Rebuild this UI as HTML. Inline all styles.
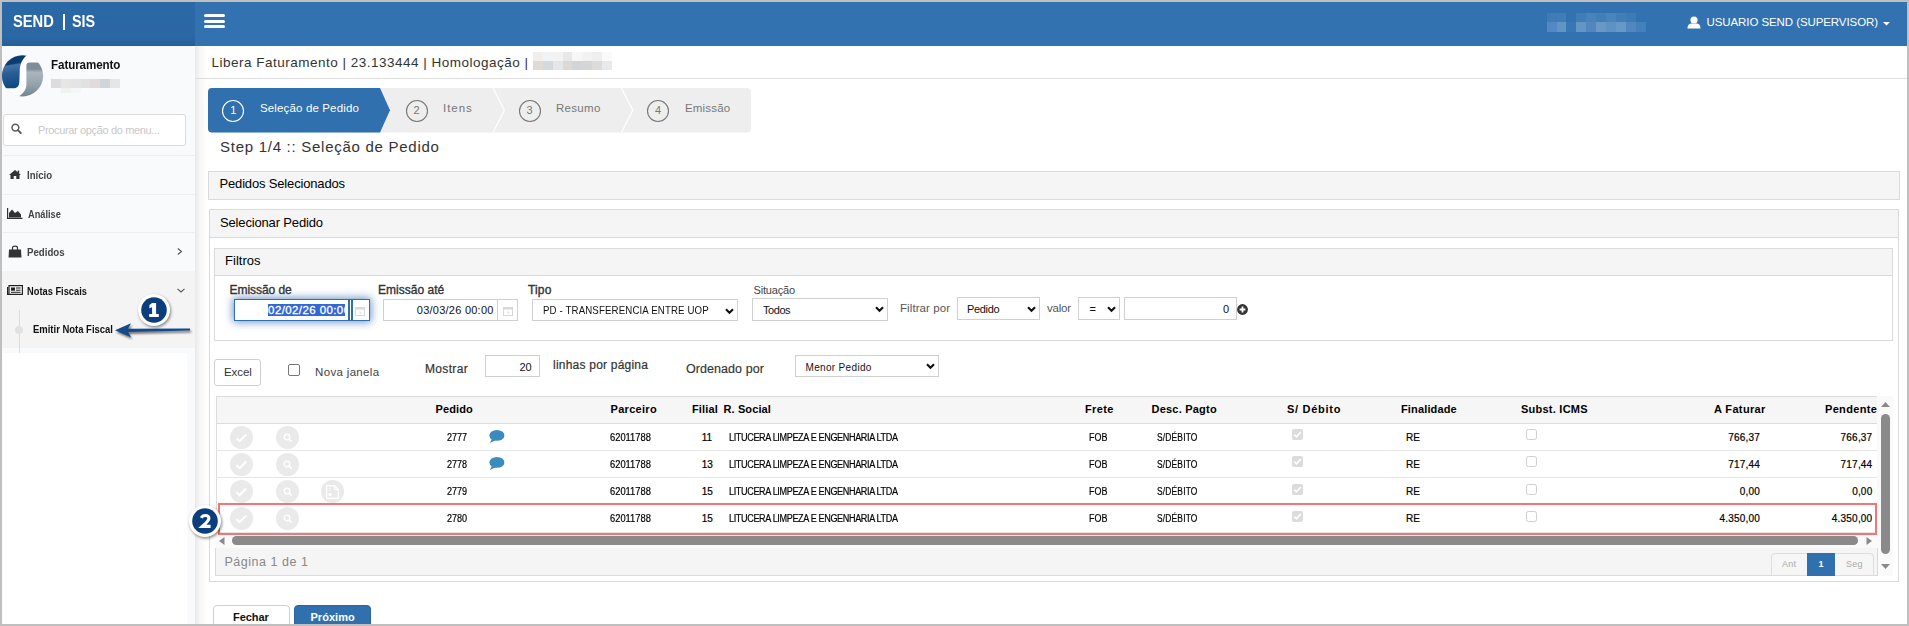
<!DOCTYPE html><html><head><meta charset="utf-8"><style>
html,body{margin:0;padding:0;}
body{width:1909px;height:626px;overflow:hidden;position:relative;background:#fff;font-family:"Liberation Sans", sans-serif;}
.t{position:absolute;white-space:nowrap;}
.r{position:absolute;box-sizing:border-box;}
svg{position:absolute;overflow:visible;}
</style></head><body>
<div class="r" style="left:0px;top:0px;width:195px;height:626px;background:#f9fafc"></div>
<div class="r" style="left:0px;top:0px;width:195px;height:46px;background:linear-gradient(#2b69a7,#2a67a4 80%,#245f9c)"></div>
<div class="r" style="left:195px;top:0px;width:1714px;height:46px;background:#3272b0"></div>
<div class="r" style="left:195px;top:46px;width:12px;height:580px;background:linear-gradient(to right,#e9e9e9,#f6f6f6 40%,#fff)"></div>
<div id="logo1" class="t" style="left:13.00px;top:14.00px;font-size:16px;line-height:16px;font-weight:700;color:#fff;letter-spacing:0px;transform:scaleX(0.919);transform-origin:0 0;">SEND</div>
<div class="r" style="left:63.2px;top:14px;width:2.200000000000003px;height:16px;background:#fff"></div>
<div id="logo3" class="t" style="left:72.40px;top:14.00px;font-size:16px;line-height:16px;font-weight:700;color:#fff;letter-spacing:0px;transform:scaleX(0.8967);transform-origin:0 0;">SIS</div>
<div class="r" style="left:204px;top:14px;width:21px;height:3px;background:#fff;border-radius:1.5px"></div>
<div class="r" style="left:204px;top:19.5px;width:21px;height:3.0px;background:#fff;border-radius:1.5px"></div>
<div class="r" style="left:204px;top:25px;width:21px;height:3px;background:#fff;border-radius:1.5px"></div>
<div class="r" style="left:1547px;top:13px;width:9.5px;height:8.5px;background:#3d7cb7"></div>
<div class="r" style="left:1547px;top:21.5px;width:9.5px;height:10.5px;background:#5288c3"></div>
<div class="r" style="left:1556.5px;top:13px;width:9.5px;height:8.5px;background:#3f7db8"></div>
<div class="r" style="left:1556.5px;top:21.5px;width:9.5px;height:10.5px;background:#6195c4"></div>
<div class="r" style="left:1566px;top:21.5px;width:10px;height:10.5px;background:#3777b3"></div>
<div class="r" style="left:1576px;top:13px;width:10px;height:8.5px;background:#3e7db8"></div>
<div class="r" style="left:1576px;top:21.5px;width:10px;height:10.5px;background:#6196c5"></div>
<div class="r" style="left:1586px;top:13px;width:10px;height:8.5px;background:#4784bb"></div>
<div class="r" style="left:1586px;top:21.5px;width:10px;height:10.5px;background:#5187bd"></div>
<div class="r" style="left:1596px;top:13px;width:10px;height:8.5px;background:#417fb7"></div>
<div class="r" style="left:1596px;top:21.5px;width:10px;height:10.5px;background:#6899c4"></div>
<div class="r" style="left:1606px;top:13px;width:10px;height:8.5px;background:#4785bc"></div>
<div class="r" style="left:1606px;top:21.5px;width:10px;height:10.5px;background:#5d93c3"></div>
<div class="r" style="left:1616px;top:13px;width:10px;height:8.5px;background:#427fb8"></div>
<div class="r" style="left:1616px;top:21.5px;width:10px;height:10.5px;background:#6699c5"></div>
<div class="r" style="left:1626px;top:13px;width:10px;height:8.5px;background:#3d7bb6"></div>
<div class="r" style="left:1626px;top:21.5px;width:10px;height:10.5px;background:#5088bd"></div>
<div class="r" style="left:1636px;top:21.5px;width:10px;height:10.5px;background:#4480ba"></div>
<svg style="left:1687px;top:16px" width="14" height="13" viewBox="0 0 14 13"><circle cx="7" cy="4" r="3.6" fill="#fff"/><path d="M0.5 12.5 C0.5 8.5 3 7.6 4.5 7.6 L9.5 7.6 C11 7.6 13.5 8.5 13.5 12.5 Z" fill="#fff"/></svg>
<div id="user" class="t" style="left:1706.50px;top:17.00px;font-size:11.5px;line-height:11.5px;font-weight:400;color:#fff;letter-spacing:-0.085px;">USUARIO SEND (SUPERVISOR)</div>
<svg style="left:1883px;top:22px" width="7" height="4" viewBox="0 0 7 4"><path d="M0 0 L7 0 L3.5 3.5Z" fill="#fff"/></svg>
<svg style="left:2px;top:55px" width="41" height="42" viewBox="0 0 41 42">
<defs><linearGradient id="gb" x1="0" y1="0" x2="0.15" y2="1"><stop offset="0" stop-color="#073a6e"/><stop offset="0.36" stop-color="#0a3e72"/><stop offset="0.40" stop-color="#4474a6"/><stop offset="0.6" stop-color="#2b5f95"/><stop offset="1" stop-color="#0e4a82"/></linearGradient>
<linearGradient id="gg" x1="0" y1="0" x2="0" y2="1"><stop offset="0.18" stop-color="#7e8d98"/><stop offset="0.27" stop-color="#aab6bd"/><stop offset="0.6" stop-color="#95a3ac"/><stop offset="1" stop-color="#6e7f8b"/></linearGradient>
<clipPath id="cc"><circle cx="20.5" cy="20.8" r="20.6"/></clipPath></defs>
<circle cx="20.5" cy="20.8" r="20.8" fill="#e9ecef"/>
<g clip-path="url(#cc)"><rect x="-2" y="-2" width="45" height="46" fill="#fff"/>
<path d="M-2 -2 L28 -2 C23 1 18.5 6 17.8 14 L17.4 26 C17.2 31 15.5 33.3 11.5 33.3 L-2 33.3 Z" fill="url(#gb)"/>
<path d="M27.6 7.4 L44 7.4 L44 44 L10 44 C18 42 24.4 37 24.4 29 L24.4 10.6 C24.4 8.6 25.6 7.4 27.6 7.4 Z" fill="url(#gg)"/>
</g></svg>
<div id="fat" class="t" style="left:51.00px;top:58.00px;font-size:13px;line-height:13px;font-weight:700;color:#111;letter-spacing:-0.1px;transform:scaleX(0.8935);transform-origin:0 0;">Faturamento</div>
<div class="r" style="left:51.0px;top:79px;width:9.850000000000001px;height:9px;background:#dddcdd"></div>
<div class="r" style="left:60.85px;top:79px;width:9.850000000000001px;height:9px;background:#e6e6e7"></div>
<div class="r" style="left:70.7px;top:79px;width:9.849999999999994px;height:9px;background:#e5e4e5"></div>
<div class="r" style="left:80.55px;top:79px;width:9.850000000000009px;height:9px;background:#e1e1e2"></div>
<div class="r" style="left:90.4px;top:79px;width:9.849999999999994px;height:9px;background:#e0dcdb"></div>
<div class="r" style="left:100.25px;top:79px;width:9.849999999999994px;height:9px;background:#d1d5da"></div>
<div class="r" style="left:110.1px;top:79px;width:9.850000000000009px;height:9px;background:#e6e6e7"></div>
<div class="r" style="left:60.85px;top:88px;width:9.850000000000001px;height:4.5px;background:#f1f1f0"></div>
<div class="r" style="left:70.7px;top:88px;width:9.849999999999994px;height:4.5px;background:#f5f6f8"></div>
<div class="r" style="left:3px;top:114px;width:183px;height:32px;background:#fff;border:1px solid #dcdcdc;border-radius:3px"></div>
<svg style="left:11px;top:123px" width="11" height="11" viewBox="0 0 11 11"><circle cx="4.4" cy="4.6" r="3.4" fill="none" stroke="#5a5a5a" stroke-width="1.5"/><path d="M6.9 7.1 L9.8 10" stroke="#5a5a5a" stroke-width="1.8" stroke-linecap="round"/></svg>
<div id="ph" class="t" style="left:38.00px;top:125.00px;font-size:11px;line-height:11px;font-weight:400;color:#c8c8c8;letter-spacing:-0.354px;">Procurar opção do menu...</div>
<div class="r" style="left:3px;top:155px;width:192px;height:1px;background:#edeef0"></div>
<div class="r" style="left:3px;top:194px;width:192px;height:1px;background:#edeef0"></div>
<div class="r" style="left:3px;top:232px;width:192px;height:1px;background:#edeef0"></div>
<div id="m1" class="t" style="left:27.00px;top:170.00px;font-size:11px;line-height:11px;font-weight:700;color:#444;letter-spacing:0px;transform:scaleX(0.8751);transform-origin:0 0;">Início</div>
<div id="m2" class="t" style="left:28.00px;top:209.00px;font-size:11px;line-height:11px;font-weight:700;color:#444;letter-spacing:0px;transform:scaleX(0.8391);transform-origin:0 0;">Análise</div>
<div id="m3" class="t" style="left:27.00px;top:247.00px;font-size:11px;line-height:11px;font-weight:700;color:#444;letter-spacing:0px;transform:scaleX(0.878);transform-origin:0 0;">Pedidos</div>
<svg style="left:9px;top:170px" width="12" height="9" viewBox="0 0 12 9"><path d="M6 0 L12 5 L10.5 5 L10.5 9 L7.3 9 L7.3 6 L4.7 6 L4.7 9 L1.5 9 L1.5 5 L0 5 Z" fill="#333"/><rect x="8.6" y="0.6" width="1.6" height="2.8" fill="#333"/></svg>
<svg style="left:7px;top:208px" width="16" height="11" viewBox="0 0 16 11"><path d="M0.6 0 L0.6 10.4 L15.5 10.4" stroke="#333" stroke-width="1.2" fill="none"/><path d="M2 9.5 L2 5 L5 1.5 L8 5 L11 3 L14 6.5 L14 9.5 Z" fill="#333"/></svg>
<svg style="left:8px;top:245px" width="14" height="13" viewBox="0 0 14 13"><path d="M4.5 5 L4.5 3 C4.5 0.5 9.5 0.5 9.5 3 L9.5 5" stroke="#333" stroke-width="1.2" fill="none"/><path d="M1 4.5 L13 4.5 L13.5 12.5 L0.5 12.5 Z" fill="#333"/></svg>
<svg style="left:177px;top:248px" width="6" height="7" viewBox="0 0 6 7"><path d="M0.8 0.5 L4.5 3.5 L0.8 6.5" stroke="#555" stroke-width="1.1" fill="none"/></svg>
<div class="r" style="left:2px;top:271px;width:193px;height:77px;background:#f4f4f5"></div>
<div id="m4" class="t" style="left:27.40px;top:286.00px;font-size:11px;line-height:11px;font-weight:700;color:#111;letter-spacing:0px;transform:scaleX(0.8447);transform-origin:0 0;">Notas Fiscais</div>
<svg style="left:7px;top:285px" width="16" height="10" viewBox="0 0 16 10"><rect x="2" y="0.6" width="13.4" height="8.8" fill="none" stroke="#222" stroke-width="1.2"/><path d="M0.6 2 L0.6 9.4 L2 9.4" stroke="#222" stroke-width="1.2" fill="none"/><rect x="4" y="2.5" width="4" height="3.2" fill="#222"/><rect x="9" y="2.5" width="4.5" height="1" fill="#222"/><rect x="9" y="4.7" width="4.5" height="1" fill="#222"/><rect x="4" y="6.8" width="9.5" height="1" fill="#222"/></svg>
<svg style="left:177px;top:288px" width="8" height="5" viewBox="0 0 8 5"><path d="M0.5 0.8 L4 4 L7.5 0.8" stroke="#555" stroke-width="1.1" fill="none"/></svg>
<div class="r" style="left:18.5px;top:310px;width:1.0px;height:43px;background:#dcdcdc"></div>
<svg style="left:15px;top:325.5px" width="8" height="8"><circle cx="4" cy="4" r="4" fill="#e1e1e1"/></svg>
<div id="m5" class="t" style="left:33.00px;top:324.00px;font-size:11px;line-height:11px;font-weight:700;color:#111;letter-spacing:0px;transform:scaleX(0.8602);transform-origin:0 0;">Emitir Nota Fiscal</div>
<div class="r" style="left:3px;top:353px;width:184px;height:273px;background:#fff"></div>
<div id="bc" class="t" style="left:211.40px;top:56.00px;font-size:13.5px;line-height:13.5px;font-weight:400;color:#333;letter-spacing:0.5px;">Libera Faturamento | 23.133444 | Homologação |</div>
<div class="r" style="left:533.0px;top:52px;width:9.850000000000023px;height:9px;background:#f0efee"></div>
<div class="r" style="left:533.0px;top:61px;width:9.850000000000023px;height:9px;background:#dedad8"></div>
<div class="r" style="left:542.85px;top:52px;width:9.850000000000023px;height:9px;background:#f2f3f5"></div>
<div class="r" style="left:542.85px;top:61px;width:9.850000000000023px;height:9px;background:#d6d9dc"></div>
<div class="r" style="left:552.7px;top:52px;width:9.849999999999909px;height:9px;background:#f3f3f3"></div>
<div class="r" style="left:552.7px;top:61px;width:9.849999999999909px;height:9px;background:#e5e6e5"></div>
<div class="r" style="left:562.55px;top:52px;width:9.850000000000023px;height:9px;background:#e8e8e8"></div>
<div class="r" style="left:562.55px;top:61px;width:9.850000000000023px;height:9px;background:#dcd8d4"></div>
<div class="r" style="left:572.4px;top:52px;width:9.850000000000023px;height:9px;background:#f7f7f7"></div>
<div class="r" style="left:572.4px;top:61px;width:9.850000000000023px;height:9px;background:#d2d5d8"></div>
<div class="r" style="left:582.25px;top:52px;width:9.850000000000023px;height:9px;background:#f1f2f1"></div>
<div class="r" style="left:582.25px;top:61px;width:9.850000000000023px;height:9px;background:#d4d6d6"></div>
<div class="r" style="left:592.1px;top:52px;width:9.850000000000023px;height:9px;background:#efefef"></div>
<div class="r" style="left:592.1px;top:61px;width:9.850000000000023px;height:9px;background:#dedcdb"></div>
<div class="r" style="left:601.95px;top:52px;width:9.849999999999909px;height:9px;background:#fafafa"></div>
<div class="r" style="left:601.95px;top:61px;width:9.849999999999909px;height:9px;background:#e8e9eb"></div>
<div class="r" style="left:195px;top:78px;width:1712px;height:1px;background:#dedede"></div>
<svg style="left:208px;top:88px" width="543" height="45" viewBox="0 0 543 45">
<path d="M4 0 L539 0 Q543 0 543 4 L543 40.5 Q543 44.5 539 44.5 L4 44.5 Q0 44.5 0 40.5 L0 4 Q0 0 4 0Z" fill="#eeeeee"/>
<path d="M4 0 L172 0 L182 22.3 L172 44.5 L4 44.5 Q0 44.5 0 40.5 L0 4 Q0 0 4 0Z" fill="#3070ae"/>
<path d="M285 0 L296.4 22.3 L285 44.5" stroke="#fff" stroke-width="1.2" fill="none"/>
<path d="M413.4 0 L424.8 22.3 L413.4 44.5" stroke="#fff" stroke-width="1.2" fill="none"/>
</svg>
<svg style="left:221.3px;top:98.8px" width="24" height="24"><circle cx="12" cy="12" r="10.5" fill="none" stroke="#fff" stroke-width="1.1"/></svg>
<svg style="left:404.5px;top:98.8px" width="24" height="24"><circle cx="12" cy="12" r="10.5" fill="none" stroke="#777" stroke-width="1.1"/></svg>
<svg style="left:517.6px;top:98.8px" width="24" height="24"><circle cx="12" cy="12" r="10.5" fill="none" stroke="#777" stroke-width="1.1"/></svg>
<svg style="left:646.2px;top:98.8px" width="24" height="24"><circle cx="12" cy="12" r="10.5" fill="none" stroke="#777" stroke-width="1.1"/></svg>
<div id="w1n" class="t" style="left:230.30px;top:105.00px;font-size:11px;line-height:11px;font-weight:400;color:#fff;letter-spacing:0px;">1</div>
<div id="w2n" class="t" style="left:413.40px;top:105.00px;font-size:11px;line-height:11px;font-weight:400;color:#777;letter-spacing:0px;">2</div>
<div id="w3n" class="t" style="left:526.50px;top:105.00px;font-size:11px;line-height:11px;font-weight:400;color:#777;letter-spacing:0px;">3</div>
<div id="w4n" class="t" style="left:655.00px;top:105.00px;font-size:11px;line-height:11px;font-weight:400;color:#777;letter-spacing:0px;">4</div>
<div id="w1" class="t" style="left:260.00px;top:103.00px;font-size:11.5px;line-height:11.5px;font-weight:400;color:#fff;letter-spacing:0.142px;">Seleção de Pedido</div>
<div id="w2" class="t" style="left:443.00px;top:103.00px;font-size:11.5px;line-height:11.5px;font-weight:400;color:#777;letter-spacing:0.95px;">Itens</div>
<div id="w3" class="t" style="left:556.00px;top:103.00px;font-size:11.5px;line-height:11.5px;font-weight:400;color:#777;letter-spacing:0.3px;">Resumo</div>
<div id="w4" class="t" style="left:685.00px;top:103.00px;font-size:11.5px;line-height:11.5px;font-weight:400;color:#777;letter-spacing:0.173px;">Emissão</div>
<div id="step" class="t" style="left:220.00px;top:139.00px;font-size:15px;line-height:15px;font-weight:400;color:#333;letter-spacing:0.728px;">Step 1/4 :: Seleção de Pedido</div>
<div class="r" style="left:208px;top:171px;width:1692px;height:29px;background:#f5f5f5;border:1px solid #dadada"></div>
<div id="p1" class="t" style="left:219.50px;top:177.00px;font-size:13px;line-height:13px;font-weight:400;color:#000;letter-spacing:-0.163px;">Pedidos Selecionados</div>
<div class="r" style="left:209px;top:209px;width:1690px;height:373px;background:#fff;border:1px solid #dadada"></div>
<div class="r" style="left:210px;top:210px;width:1688px;height:28px;background:#f5f5f5;border-bottom:1px solid #dadada"></div>
<div id="p2" class="t" style="left:220.00px;top:216.00px;font-size:13px;line-height:13px;font-weight:400;color:#000;letter-spacing:-0.158px;">Selecionar Pedido</div>
<div class="r" style="left:214px;top:248px;width:1679px;height:93px;background:#fff;border:1px solid #dadada"></div>
<div class="r" style="left:215px;top:249px;width:1677px;height:27px;background:#f5f5f5;border-bottom:1px solid #dadada"></div>
<div id="p3" class="t" style="left:225.00px;top:254.00px;font-size:13px;line-height:13px;font-weight:400;color:#000;letter-spacing:0.032px;">Filtros</div>
<div id="l1" class="t" style="left:229.50px;top:284.00px;font-size:12px;line-height:12px;font-weight:400;color:#333;letter-spacing:-0.049px;-webkit-text-stroke:0.35px #333;">Emissão de</div>
<div id="l2" class="t" style="left:378.00px;top:284.00px;font-size:12px;line-height:12px;font-weight:400;color:#333;letter-spacing:0.02px;-webkit-text-stroke:0.35px #333;">Emissão até</div>
<div id="l3" class="t" style="left:528.00px;top:284.00px;font-size:12px;line-height:12px;font-weight:400;color:#333;letter-spacing:0.138px;-webkit-text-stroke:0.35px #333;">Tipo</div>
<div id="l4" class="t" style="left:753.50px;top:285.00px;font-size:11px;line-height:11px;font-weight:400;color:#444;letter-spacing:-0.167px;">Situação</div>
<div class="r" style="left:234px;top:299px;width:136px;height:22px;box-shadow:0 0 8px 1px rgba(40,100,170,0.7)"></div>
<div class="r" style="left:234px;top:299px;width:115px;height:22px;background:#fff;border:1px solid #2f6fb0"></div>
<div class="r" style="left:349px;top:299px;width:3px;height:22px;background:#fff;border-top:1px solid #2f6fb0;border-bottom:1px solid #2f6fb0"></div>
<div class="r" style="left:348px;top:299px;width:2px;height:22px;background:#2f6fb0"></div>
<div class="r" style="left:351px;top:299px;width:2px;height:22px;background:#2f6fb0"></div>
<div class="r" style="left:352px;top:299px;width:18px;height:22px;background:#fff;border:1px solid #2f6fb0"></div>
<div style="position:absolute;left:268px;top:304px;width:77px;height:12px;overflow:hidden;background:#3367d6"><div id="d1" class="t" style="left:0.10px;top:1.00px;font-size:11.5px;line-height:11.5px;font-weight:400;color:#fff;letter-spacing:0.4px;-webkit-text-stroke:0.3px #fff;">02/02/26 00:00</div></div>
<div class="r" style="left:383px;top:299px;width:115px;height:22px;background:#fff;border:1px solid #d0d0d0"></div>
<div class="r" style="left:497px;top:299px;width:21px;height:22px;background:#fff;border:1px solid #d0d0d0"></div>
<div id="d2" class="t" style="left:416.80px;top:305.00px;font-size:11px;line-height:11px;font-weight:400;color:#111;letter-spacing:0.247px;">03/03/26 00:00</div>
<svg style="left:355px;top:306px" width="10" height="10" viewBox="0 0 10 10"><rect x="0.5" y="1.5" width="9" height="8" fill="none" stroke="#d8d8d8" stroke-width="1"/><rect x="0.5" y="1.5" width="9" height="2" fill="#d8d8d8"/><path d="M4 6 L6 6 L5 8" stroke="#d8d8d8" stroke-width="0.8" fill="none"/></svg>
<svg style="left:503px;top:306px" width="10" height="10" viewBox="0 0 10 10"><rect x="0.5" y="1.5" width="9" height="8" fill="none" stroke="#d8d8d8" stroke-width="1"/><rect x="0.5" y="1.5" width="9" height="2" fill="#d8d8d8"/><path d="M4 6 L6 6 L5 8" stroke="#d8d8d8" stroke-width="0.8" fill="none"/></svg>
<div class="r" style="left:532px;top:299px;width:206px;height:22px;background:#fff;border:1px solid #d0d0d0"></div>
<div id="s1" class="t" style="left:542.50px;top:305.00px;font-size:11px;line-height:11px;font-weight:400;color:#111;letter-spacing:0.15px;transform:scaleX(0.8792);transform-origin:0 0;">PD - TRANSFERENCIA ENTRE UOP</div>
<svg style="left:725px;top:307.5px" width="9" height="6" viewBox="0 0 9 6"><path d="M1 1.2 L4.5 4.7 L8 1.2" stroke="#111" stroke-width="2.1" fill="none"/></svg>
<div class="r" style="left:752px;top:298px;width:136px;height:23px;background:#fff;border:1px solid #d0d0d0"></div>
<div id="s2" class="t" style="left:763.00px;top:305.00px;font-size:11px;line-height:11px;font-weight:400;color:#111;letter-spacing:-0.45px;">Todos</div>
<svg style="left:875px;top:306px" width="9" height="6" viewBox="0 0 9 6"><path d="M1 1.2 L4.5 4.7 L8 1.2" stroke="#111" stroke-width="2.1" fill="none"/></svg>
<div id="fp" class="t" style="left:900.00px;top:303.00px;font-size:11.5px;line-height:11.5px;font-weight:400;color:#555;letter-spacing:0.09px;">Filtrar por</div>
<div class="r" style="left:957px;top:297px;width:83px;height:23px;background:#fff;border:1px solid #d0d0d0"></div>
<div id="s3" class="t" style="left:967.00px;top:304.00px;font-size:11px;line-height:11px;font-weight:400;color:#111;letter-spacing:-0.32px;">Pedido</div>
<svg style="left:1027px;top:305.5px" width="9" height="6" viewBox="0 0 9 6"><path d="M1 1.2 L4.5 4.7 L8 1.2" stroke="#111" stroke-width="2.1" fill="none"/></svg>
<div id="vl" class="t" style="left:1047.00px;top:303.00px;font-size:11.5px;line-height:11.5px;font-weight:400;color:#555;letter-spacing:-0.2px;">valor</div>
<div class="r" style="left:1078px;top:297px;width:42px;height:23px;background:#fff;border:1px solid #d0d0d0"></div>
<div id="s4" class="t" style="left:1089.60px;top:304.00px;font-size:11px;line-height:11px;font-weight:400;color:#111;letter-spacing:0px;">=</div>
<svg style="left:1107px;top:305.5px" width="9" height="6" viewBox="0 0 9 6"><path d="M1 1.2 L4.5 4.7 L8 1.2" stroke="#111" stroke-width="2.1" fill="none"/></svg>
<div class="r" style="left:1124px;top:297px;width:113px;height:23px;background:#fff;border:1px solid #d0d0d0"></div>
<div id="s5" class="t" style="left:1223.00px;top:304.00px;font-size:11px;line-height:11px;font-weight:400;color:#111;letter-spacing:0px;">0</div>
<svg style="left:1237px;top:304.4px" width="11" height="11" viewBox="0 0 11 11"><circle cx="5.5" cy="5.5" r="5.4" fill="#333"/><path d="M5.5 2.6 L5.5 8.4 M2.6 5.5 L8.4 5.5" stroke="#fff" stroke-width="1.8"/></svg>
<div class="r" style="left:214px;top:359px;width:47px;height:27px;background:#fff;border:1px solid #cfcfcf;border-radius:3px"></div>
<div id="xl" class="t" style="left:224.00px;top:367.00px;font-size:11.5px;line-height:11.5px;font-weight:400;color:#333;letter-spacing:-0.05px;">Excel</div>
<div class="r" style="left:288px;top:364px;width:12px;height:12px;background:#fff;border:1px solid #767676;border-radius:2px"></div>
<div id="nj" class="t" style="left:315.00px;top:367.00px;font-size:11.5px;line-height:11.5px;font-weight:400;color:#444;letter-spacing:0.34px;">Nova janela</div>
<div id="ms" class="t" style="left:425.00px;top:363.00px;font-size:12px;line-height:12px;font-weight:400;color:#333;letter-spacing:0.339px;-webkit-text-stroke:0.2px #333;">Mostrar</div>
<div class="r" style="left:485px;top:355px;width:55px;height:22px;background:#fff;border:1px solid #d0d0d0"></div>
<div id="n20" class="t" style="left:519.50px;top:362.00px;font-size:11px;line-height:11px;font-weight:400;color:#111;letter-spacing:0px;">20</div>
<div id="lp" class="t" style="left:553.00px;top:359.00px;font-size:12px;line-height:12px;font-weight:400;color:#333;letter-spacing:0.221px;-webkit-text-stroke:0.2px #333;">linhas por página</div>
<div id="op" class="t" style="left:686.00px;top:363.00px;font-size:12.5px;line-height:12.5px;font-weight:400;color:#333;letter-spacing:0.062px;-webkit-text-stroke:0.15px #333;">Ordenado por</div>
<div class="r" style="left:795px;top:355px;width:144px;height:22px;background:#fff;border:1px solid #d0d0d0"></div>
<div id="s6" class="t" style="left:805.50px;top:363.00px;font-size:10px;line-height:10px;font-weight:400;color:#111;letter-spacing:0.332px;">Menor Pedido</div>
<svg style="left:925.5px;top:363px" width="9" height="6" viewBox="0 0 9 6"><path d="M1 1.2 L4.5 4.7 L8 1.2" stroke="#111" stroke-width="2.1" fill="none"/></svg>
<div class="r" style="left:1877px;top:396px;width:16px;height:180px;background:#fafafa"></div>
<div class="r" style="left:216px;top:396px;width:1661px;height:152px;background:#fff;border-left:1px solid #dcdcdc;border-top:1px solid #dcdcdc"></div>
<div class="r" style="left:216px;top:396px;width:1661px;height:28px;background:#f6f6f6;border:1px solid #dcdcdc;border-right:none"></div>
<div class="r" style="left:216px;top:450px;width:1661px;height:1px;background:#e6e6e6"></div>
<div class="r" style="left:216px;top:477px;width:1661px;height:1px;background:#e6e6e6"></div>
<div class="r" style="left:216px;top:504px;width:1661px;height:1px;background:#e6e6e6"></div>
<div class="r" style="left:216px;top:532px;width:1661px;height:1px;background:#e6e6e6"></div>
<div class="r" style="left:216px;top:533px;width:1661px;height:15px;background:#fafafa"></div>
<div id="h1" class="t" style="left:435.50px;top:404.00px;font-size:11px;line-height:11px;font-weight:700;color:#000;letter-spacing:0.1px;">Pedido</div>
<div id="h2" class="t" style="left:610.50px;top:404.00px;font-size:11px;line-height:11px;font-weight:700;color:#000;letter-spacing:0.303px;">Parceiro</div>
<div id="h3" class="t" style="left:692.00px;top:404.00px;font-size:11px;line-height:11px;font-weight:700;color:#000;letter-spacing:0.14px;">Filial</div>
<div id="h4" class="t" style="left:723.50px;top:404.00px;font-size:11px;line-height:11px;font-weight:700;color:#000;letter-spacing:0.117px;">R. Social</div>
<div id="h5" class="t" style="left:1085.00px;top:404.00px;font-size:11px;line-height:11px;font-weight:700;color:#000;letter-spacing:0.35px;">Frete</div>
<div id="h6" class="t" style="left:1151.50px;top:404.00px;font-size:11px;line-height:11px;font-weight:700;color:#000;letter-spacing:0.22px;">Desc. Pagto</div>
<div id="h7" class="t" style="left:1287.00px;top:404.00px;font-size:11px;line-height:11px;font-weight:700;color:#000;letter-spacing:0.717px;">S/ Débito</div>
<div id="h8" class="t" style="left:1401.00px;top:404.00px;font-size:11px;line-height:11px;font-weight:700;color:#000;letter-spacing:0.148px;">Finalidade</div>
<div id="h9" class="t" style="left:1521.00px;top:404.00px;font-size:11px;line-height:11px;font-weight:700;color:#000;letter-spacing:0.24px;">Subst. ICMS</div>
<div id="h10" class="t" style="left:1714.00px;top:404.00px;font-size:11px;line-height:11px;font-weight:700;color:#000;letter-spacing:0.358px;">A Faturar</div>
<div id="h11" class="t" style="left:1825.00px;top:404.00px;font-size:11px;line-height:11px;font-weight:700;color:#000;letter-spacing:0.332px;">Pendente</div>
<svg style="left:230.0px;top:425.5px" width="23" height="23"><circle cx="11.5" cy="11.5" r="11.5" fill="#eaeaea"/></svg>
<svg style="left:276.0px;top:425.5px" width="23" height="23"><circle cx="11.5" cy="11.5" r="11.5" fill="#eaeaea"/></svg>
<svg style="left:235px;top:432.5px" width="13" height="10" viewBox="0 0 13 10"><path d="M1.5 5.2 L4.6 8.2 L11.2 1.5" stroke="#fff" stroke-width="2" fill="none"/></svg>
<svg style="left:283px;top:432.5px" width="10" height="10" viewBox="0 0 10 10"><circle cx="4" cy="4" r="2.8" fill="none" stroke="#fff" stroke-width="1.3"/><path d="M6 6 L8.6 8.6" stroke="#fff" stroke-width="1.6"/></svg>
<div id="r0a" class="t" style="left:446.50px;top:433.00px;font-size:10px;line-height:10px;font-weight:400;color:#000;letter-spacing:0px;transform:scaleX(0.9035);transform-origin:0 0;-webkit-text-stroke:0.2px #000;">2777</div>
<svg style="left:489px;top:430.0px" width="16" height="14" viewBox="0 0 16 14"><ellipse cx="7.9" cy="5.4" rx="7.5" ry="5.4" fill="#3c8bc0"/><path d="M3 8.5 L1 13 L7 10" fill="#3c8bc0"/></svg>
<div id="r0b" class="t" style="left:610.00px;top:433.00px;font-size:10px;line-height:10px;font-weight:400;color:#000;letter-spacing:0px;transform:scaleX(0.9355);transform-origin:0 0;-webkit-text-stroke:0.2px #000;">62011788</div>
<div id="r0c" class="t" style="left:701.80px;top:433.00px;font-size:10px;line-height:10px;font-weight:400;color:#000;letter-spacing:0px;-webkit-text-stroke:0.2px #000;">11</div>
<div id="r0d" class="t" style="left:729.00px;top:433.00px;font-size:10px;line-height:10px;font-weight:400;color:#000;letter-spacing:-0.4px;transform:scaleX(0.9081);transform-origin:0 0;-webkit-text-stroke:0.2px #000;">LITUCERA LIMPEZA E ENGENHARIA LTDA</div>
<div id="r0e" class="t" style="left:1089.00px;top:433.00px;font-size:10px;line-height:10px;font-weight:400;color:#000;letter-spacing:0px;transform:scaleX(0.895);transform-origin:0 0;-webkit-text-stroke:0.2px #000;">FOB</div>
<div id="r0f" class="t" style="left:1157.00px;top:433.00px;font-size:10px;line-height:10px;font-weight:400;color:#000;letter-spacing:0.2px;transform:scaleX(0.8434);transform-origin:0 0;-webkit-text-stroke:0.2px #000;">S/DÉBITO</div>
<svg style="left:1292px;top:429.0px" width="11" height="11" viewBox="0 0 11 11"><rect x="0" y="0" width="11" height="11" rx="2" fill="#dcdcdc"/><path d="M2.3 5.6 L4.5 7.8 L8.8 3" stroke="#fff" stroke-width="1.6" fill="none"/></svg>
<div id="r0g" class="t" style="left:1406.00px;top:433.00px;font-size:10px;line-height:10px;font-weight:400;color:#000;letter-spacing:0px;-webkit-text-stroke:0.2px #000;">RE</div>
<svg style="left:1526px;top:429.0px" width="11" height="11" viewBox="0 0 11 11"><rect x="0.5" y="0.5" width="10" height="10" rx="2" fill="#fff" stroke="#cfcfcf" stroke-width="1"/></svg>
<div id="r0h" class="t" style="left:1700.60px;top:433.00px;font-size:10px;line-height:10px;font-weight:400;color:#000;letter-spacing:0.2px;-webkit-text-stroke:0.2px #000;text-align:right;width:59.5px;">766,37</div>
<div id="r0i" class="t" style="left:1813.10px;top:433.00px;font-size:10px;line-height:10px;font-weight:400;color:#000;letter-spacing:0.2px;-webkit-text-stroke:0.2px #000;text-align:right;width:59.3px;">766,37</div>
<svg style="left:230.0px;top:452.5px" width="23" height="23"><circle cx="11.5" cy="11.5" r="11.5" fill="#eaeaea"/></svg>
<svg style="left:276.0px;top:452.5px" width="23" height="23"><circle cx="11.5" cy="11.5" r="11.5" fill="#eaeaea"/></svg>
<svg style="left:235px;top:459.5px" width="13" height="10" viewBox="0 0 13 10"><path d="M1.5 5.2 L4.6 8.2 L11.2 1.5" stroke="#fff" stroke-width="2" fill="none"/></svg>
<svg style="left:283px;top:459.5px" width="10" height="10" viewBox="0 0 10 10"><circle cx="4" cy="4" r="2.8" fill="none" stroke="#fff" stroke-width="1.3"/><path d="M6 6 L8.6 8.6" stroke="#fff" stroke-width="1.6"/></svg>
<div id="r1a" class="t" style="left:446.50px;top:460.00px;font-size:10px;line-height:10px;font-weight:400;color:#000;letter-spacing:0px;transform:scaleX(0.9035);transform-origin:0 0;-webkit-text-stroke:0.2px #000;">2778</div>
<svg style="left:489px;top:457.0px" width="16" height="14" viewBox="0 0 16 14"><ellipse cx="7.9" cy="5.4" rx="7.5" ry="5.4" fill="#3c8bc0"/><path d="M3 8.5 L1 13 L7 10" fill="#3c8bc0"/></svg>
<div id="r1b" class="t" style="left:610.00px;top:460.00px;font-size:10px;line-height:10px;font-weight:400;color:#000;letter-spacing:0px;transform:scaleX(0.9355);transform-origin:0 0;-webkit-text-stroke:0.2px #000;">62011788</div>
<div id="r1c" class="t" style="left:701.80px;top:460.00px;font-size:10px;line-height:10px;font-weight:400;color:#000;letter-spacing:0px;-webkit-text-stroke:0.2px #000;">13</div>
<div id="r1d" class="t" style="left:729.00px;top:460.00px;font-size:10px;line-height:10px;font-weight:400;color:#000;letter-spacing:-0.4px;transform:scaleX(0.9081);transform-origin:0 0;-webkit-text-stroke:0.2px #000;">LITUCERA LIMPEZA E ENGENHARIA LTDA</div>
<div id="r1e" class="t" style="left:1089.00px;top:460.00px;font-size:10px;line-height:10px;font-weight:400;color:#000;letter-spacing:0px;transform:scaleX(0.895);transform-origin:0 0;-webkit-text-stroke:0.2px #000;">FOB</div>
<div id="r1f" class="t" style="left:1157.00px;top:460.00px;font-size:10px;line-height:10px;font-weight:400;color:#000;letter-spacing:0.2px;transform:scaleX(0.8434);transform-origin:0 0;-webkit-text-stroke:0.2px #000;">S/DÉBITO</div>
<svg style="left:1292px;top:456.0px" width="11" height="11" viewBox="0 0 11 11"><rect x="0" y="0" width="11" height="11" rx="2" fill="#dcdcdc"/><path d="M2.3 5.6 L4.5 7.8 L8.8 3" stroke="#fff" stroke-width="1.6" fill="none"/></svg>
<div id="r1g" class="t" style="left:1406.00px;top:460.00px;font-size:10px;line-height:10px;font-weight:400;color:#000;letter-spacing:0px;-webkit-text-stroke:0.2px #000;">RE</div>
<svg style="left:1526px;top:456.0px" width="11" height="11" viewBox="0 0 11 11"><rect x="0.5" y="0.5" width="10" height="10" rx="2" fill="#fff" stroke="#cfcfcf" stroke-width="1"/></svg>
<div id="r1h" class="t" style="left:1700.60px;top:460.00px;font-size:10px;line-height:10px;font-weight:400;color:#000;letter-spacing:0.2px;-webkit-text-stroke:0.2px #000;text-align:right;width:59.5px;">717,44</div>
<div id="r1i" class="t" style="left:1813.10px;top:460.00px;font-size:10px;line-height:10px;font-weight:400;color:#000;letter-spacing:0.2px;-webkit-text-stroke:0.2px #000;text-align:right;width:59.3px;">717,44</div>
<svg style="left:230.0px;top:480.0px" width="23" height="23"><circle cx="11.5" cy="11.5" r="11.5" fill="#eaeaea"/></svg>
<svg style="left:276.0px;top:480.0px" width="23" height="23"><circle cx="11.5" cy="11.5" r="11.5" fill="#eaeaea"/></svg>
<svg style="left:235px;top:487.0px" width="13" height="10" viewBox="0 0 13 10"><path d="M1.5 5.2 L4.6 8.2 L11.2 1.5" stroke="#fff" stroke-width="2" fill="none"/></svg>
<svg style="left:283px;top:487.0px" width="10" height="10" viewBox="0 0 10 10"><circle cx="4" cy="4" r="2.8" fill="none" stroke="#fff" stroke-width="1.3"/><path d="M6 6 L8.6 8.6" stroke="#fff" stroke-width="1.6"/></svg>
<svg style="left:321px;top:479.5px" width="23" height="23"><circle cx="11.5" cy="11.5" r="11.5" fill="#eaeaea"/></svg>
<svg style="left:325.5px;top:484.5px" width="13" height="14" viewBox="0 0 13 14"><path d="M0.6 0.6 L8.5 0.6 L12.4 4.5 L12.4 13.4 L0.6 13.4 Z" fill="none" stroke="#fff" stroke-width="1.2"/><path d="M8.5 0.6 L8.5 4.5 L12.4 4.5" fill="none" stroke="#fff" stroke-width="1"/><path d="M4 1 L4 7" stroke="#fff" stroke-width="1.2" stroke-dasharray="1 1"/><circle cx="4" cy="9.5" r="1.6" fill="#fff"/></svg>
<div id="r2a" class="t" style="left:446.50px;top:487.00px;font-size:10px;line-height:10px;font-weight:400;color:#000;letter-spacing:0px;transform:scaleX(0.9035);transform-origin:0 0;-webkit-text-stroke:0.2px #000;">2779</div>
<div id="r2b" class="t" style="left:610.00px;top:487.00px;font-size:10px;line-height:10px;font-weight:400;color:#000;letter-spacing:0px;transform:scaleX(0.9355);transform-origin:0 0;-webkit-text-stroke:0.2px #000;">62011788</div>
<div id="r2c" class="t" style="left:701.80px;top:487.00px;font-size:10px;line-height:10px;font-weight:400;color:#000;letter-spacing:0px;-webkit-text-stroke:0.2px #000;">15</div>
<div id="r2d" class="t" style="left:729.00px;top:487.00px;font-size:10px;line-height:10px;font-weight:400;color:#000;letter-spacing:-0.4px;transform:scaleX(0.9081);transform-origin:0 0;-webkit-text-stroke:0.2px #000;">LITUCERA LIMPEZA E ENGENHARIA LTDA</div>
<div id="r2e" class="t" style="left:1089.00px;top:487.00px;font-size:10px;line-height:10px;font-weight:400;color:#000;letter-spacing:0px;transform:scaleX(0.895);transform-origin:0 0;-webkit-text-stroke:0.2px #000;">FOB</div>
<div id="r2f" class="t" style="left:1157.00px;top:487.00px;font-size:10px;line-height:10px;font-weight:400;color:#000;letter-spacing:0.2px;transform:scaleX(0.8434);transform-origin:0 0;-webkit-text-stroke:0.2px #000;">S/DÉBITO</div>
<svg style="left:1292px;top:483.5px" width="11" height="11" viewBox="0 0 11 11"><rect x="0" y="0" width="11" height="11" rx="2" fill="#dcdcdc"/><path d="M2.3 5.6 L4.5 7.8 L8.8 3" stroke="#fff" stroke-width="1.6" fill="none"/></svg>
<div id="r2g" class="t" style="left:1406.00px;top:487.00px;font-size:10px;line-height:10px;font-weight:400;color:#000;letter-spacing:0px;-webkit-text-stroke:0.2px #000;">RE</div>
<svg style="left:1526px;top:483.5px" width="11" height="11" viewBox="0 0 11 11"><rect x="0.5" y="0.5" width="10" height="10" rx="2" fill="#fff" stroke="#cfcfcf" stroke-width="1"/></svg>
<div id="r2h" class="t" style="left:1700.60px;top:487.00px;font-size:10px;line-height:10px;font-weight:400;color:#000;letter-spacing:0.2px;-webkit-text-stroke:0.2px #000;text-align:right;width:59.5px;">0,00</div>
<div id="r2i" class="t" style="left:1813.10px;top:487.00px;font-size:10px;line-height:10px;font-weight:400;color:#000;letter-spacing:0.2px;-webkit-text-stroke:0.2px #000;text-align:right;width:59.3px;">0,00</div>
<svg style="left:230.0px;top:507.1px" width="23" height="23"><circle cx="11.5" cy="11.5" r="11.5" fill="#eaeaea"/></svg>
<svg style="left:276.0px;top:507.1px" width="23" height="23"><circle cx="11.5" cy="11.5" r="11.5" fill="#eaeaea"/></svg>
<svg style="left:235px;top:514.1px" width="13" height="10" viewBox="0 0 13 10"><path d="M1.5 5.2 L4.6 8.2 L11.2 1.5" stroke="#fff" stroke-width="2" fill="none"/></svg>
<svg style="left:283px;top:514.1px" width="10" height="10" viewBox="0 0 10 10"><circle cx="4" cy="4" r="2.8" fill="none" stroke="#fff" stroke-width="1.3"/><path d="M6 6 L8.6 8.6" stroke="#fff" stroke-width="1.6"/></svg>
<div id="r3a" class="t" style="left:446.50px;top:514.00px;font-size:10px;line-height:10px;font-weight:400;color:#000;letter-spacing:0px;transform:scaleX(0.9035);transform-origin:0 0;-webkit-text-stroke:0.2px #000;">2780</div>
<div id="r3b" class="t" style="left:610.00px;top:514.00px;font-size:10px;line-height:10px;font-weight:400;color:#000;letter-spacing:0px;transform:scaleX(0.9355);transform-origin:0 0;-webkit-text-stroke:0.2px #000;">62011788</div>
<div id="r3c" class="t" style="left:701.80px;top:514.00px;font-size:10px;line-height:10px;font-weight:400;color:#000;letter-spacing:0px;-webkit-text-stroke:0.2px #000;">15</div>
<div id="r3d" class="t" style="left:729.00px;top:514.00px;font-size:10px;line-height:10px;font-weight:400;color:#000;letter-spacing:-0.4px;transform:scaleX(0.9081);transform-origin:0 0;-webkit-text-stroke:0.2px #000;">LITUCERA LIMPEZA E ENGENHARIA LTDA</div>
<div id="r3e" class="t" style="left:1089.00px;top:514.00px;font-size:10px;line-height:10px;font-weight:400;color:#000;letter-spacing:0px;transform:scaleX(0.895);transform-origin:0 0;-webkit-text-stroke:0.2px #000;">FOB</div>
<div id="r3f" class="t" style="left:1157.00px;top:514.00px;font-size:10px;line-height:10px;font-weight:400;color:#000;letter-spacing:0.2px;transform:scaleX(0.8434);transform-origin:0 0;-webkit-text-stroke:0.2px #000;">S/DÉBITO</div>
<svg style="left:1292px;top:510.6px" width="11" height="11" viewBox="0 0 11 11"><rect x="0" y="0" width="11" height="11" rx="2" fill="#dcdcdc"/><path d="M2.3 5.6 L4.5 7.8 L8.8 3" stroke="#fff" stroke-width="1.6" fill="none"/></svg>
<div id="r3g" class="t" style="left:1406.00px;top:514.00px;font-size:10px;line-height:10px;font-weight:400;color:#000;letter-spacing:0px;-webkit-text-stroke:0.2px #000;">RE</div>
<svg style="left:1526px;top:510.6px" width="11" height="11" viewBox="0 0 11 11"><rect x="0.5" y="0.5" width="10" height="10" rx="2" fill="#fff" stroke="#cfcfcf" stroke-width="1"/></svg>
<div id="r3h" class="t" style="left:1700.60px;top:514.00px;font-size:10px;line-height:10px;font-weight:400;color:#000;letter-spacing:0.2px;-webkit-text-stroke:0.2px #000;text-align:right;width:59.5px;">4.350,00</div>
<div id="r3i" class="t" style="left:1813.10px;top:514.00px;font-size:10px;line-height:10px;font-weight:400;color:#000;letter-spacing:0.2px;-webkit-text-stroke:0.2px #000;text-align:right;width:59.3px;">4.350,00</div>
<div class="r" style="left:218px;top:503px;width:1659px;height:32px;border:2px solid #f57474"></div>
<svg style="left:219px;top:536.5px" width="6" height="8" viewBox="0 0 6 8"><path d="M5.5 0 L0 4 L5.5 8Z" fill="#8a8a8a"/></svg>
<div class="r" style="left:232px;top:536px;width:1626px;height:8.5px;background:#8a8a8a;border-radius:4.25px"></div>
<svg style="left:1866px;top:537px" width="6" height="8" viewBox="0 0 6 8"><path d="M0.5 0 L6 4 L0.5 8Z" fill="#8a8a8a"/></svg>
<svg style="left:1881px;top:402px" width="9" height="5" viewBox="0 0 9 5"><path d="M0 5 L4.5 0 L9 5Z" fill="#8a8a8a"/></svg>
<div class="r" style="left:1881px;top:414px;width:9px;height:139.5px;background:#8a8a8a;border-radius:4.5px"></div>
<svg style="left:1881px;top:564px" width="9" height="5" viewBox="0 0 9 5"><path d="M0 0 L4.5 5 L9 0Z" fill="#8a8a8a"/></svg>
<div class="r" style="left:215px;top:548px;width:1663px;height:28px;background:#f5f5f5;border:1px solid #dadada;border-top:none"></div>
<div id="pg" class="t" style="left:224.50px;top:556.00px;font-size:12.5px;line-height:12.5px;font-weight:400;color:#888;letter-spacing:0.52px;">Página 1 de 1</div>
<div class="r" style="left:1771px;top:553px;width:103px;height:23px;background:#f6f6f6;border:1px solid #dddddd;border-radius:4px 4px 0 0"></div>
<div class="r" style="left:1807px;top:553px;width:28px;height:23px;background:#3070ae"></div>
<div id="pa" class="t" style="left:1782.00px;top:560.00px;font-size:9px;line-height:9px;font-weight:400;color:#aaa;letter-spacing:0.3px;">Ant</div>
<div id="pb" class="t" style="left:1818.50px;top:560.00px;font-size:9px;line-height:9px;font-weight:700;color:#fff;letter-spacing:0px;">1</div>
<div id="pc" class="t" style="left:1846.00px;top:560.00px;font-size:9px;line-height:9px;font-weight:400;color:#aaa;letter-spacing:0.2px;">Seg</div>
<div class="r" style="left:213px;top:605px;width:77px;height:35px;background:#fff;border:1px solid #cfcfcf;border-radius:4px"></div>
<div id="bf" class="t" style="left:233.00px;top:612.00px;font-size:11px;line-height:11px;font-weight:700;color:#111;letter-spacing:-0.04px;">Fechar</div>
<div class="r" style="left:294px;top:605px;width:77px;height:35px;background:#3070ae;border:1px solid #2a65a0;border-radius:4px"></div>
<div id="bp" class="t" style="left:310.50px;top:612.00px;font-size:11px;line-height:11px;font-weight:700;color:#fff;letter-spacing:0.032px;">Próximo</div>
<svg style="left:100px;top:315px" width="100" height="30" viewBox="0 0 100 30"><defs><filter id="ash" x="-10%" y="-50%" width="120%" height="200%"><feGaussianBlur stdDeviation="1.3"/></filter></defs><g transform="translate(1.2,2)" filter="url(#ash)" opacity="0.55"><path d="M15 15.3 L31 8.3 L28 13.7 L90 13.4 L90 15.4 L28 17 L31 22.2 Z" fill="#000"/></g><path d="M15 15.3 L31 8.3 L28 13.7 L90 13.4 L90 15.4 L28 17 L31 22.2 Z" fill="#134a8b"/></svg>
<svg style="left:132px;top:288px" width="44" height="44" viewBox="0 0 44 44"><defs><filter id="sh1" x="-30%" y="-30%" width="160%" height="160%"><feGaussianBlur stdDeviation="1.6"/></filter></defs><circle cx="23" cy="23.5" r="16" fill="rgba(0,0,0,0.45)" filter="url(#sh1)"/><circle cx="22" cy="22" r="16" fill="#fff"/><circle cx="22" cy="22" r="12.8" fill="#0c3d7d"/></svg>
<svg style="left:149.3px;top:303px" width="10" height="14" viewBox="0 0 10 14"><path d="M3.1 0 L7.1 0 L7.1 10.9 L9.8 10.9 L9.8 14 L0.2 14 L0.2 10.9 L3.1 10.9 L3.1 4.3 L0.4 5.2 L0.4 2.1 Z" fill="#fff"/></svg>
<svg style="left:183px;top:499px" width="44" height="44" viewBox="0 0 44 44"><defs><filter id="sh2" x="-30%" y="-30%" width="160%" height="160%"><feGaussianBlur stdDeviation="1.6"/></filter></defs><circle cx="23" cy="23.5" r="16" fill="rgba(0,0,0,0.45)" filter="url(#sh2)"/><circle cx="22" cy="22" r="16" fill="#fff"/><circle cx="22" cy="22" r="12.8" fill="#0c3d7d"/></svg>
<svg style="left:200px;top:514px" width="11" height="14" viewBox="0 0 11 14"><path d="M1.3 3.9 C2.2 1.8 3.8 1.5 5.4 1.5 C7.8 1.5 8.9 2.9 8.9 4.5 C8.9 6.6 7.2 8 2.3 12.4 L10.6 12.4" fill="none" stroke="#fff" stroke-width="3.1" stroke-linejoin="miter"/></svg>
<div class="r" style="left:0px;top:0px;width:1909px;height:2px;background:#bfbfbf"></div>
<div class="r" style="left:0px;top:624px;width:1909px;height:2px;background:#bfbfbf"></div>
<div class="r" style="left:0px;top:0px;width:2px;height:626px;background:#bfbfbf"></div>
<div class="r" style="left:1907px;top:0px;width:2px;height:626px;background:#bfbfbf"></div>
</body></html>
